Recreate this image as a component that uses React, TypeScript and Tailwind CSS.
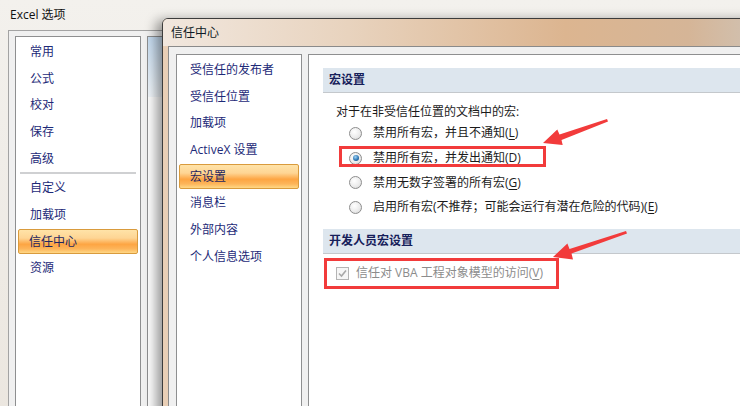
import React from "react";

const font = "font-['Open_Sans','Noto_Sans_CJK_SC',sans-serif]";

const NavItem = ({ label, active, pad }: { label: string; active?: boolean; pad: string }) => (
  <div className="h-[26.7px] flex items-center">
    {active ? (
      <div className="mx-[2px] h-[25px] w-full flex items-center pl-[10px] border border-[#d99b3d] rounded-[2px] bg-[linear-gradient(to_bottom,#ffe3a8_0%,#fed594_35%,#fda543_62%,#fdb55a_82%,#ffd886_100%)] text-[#1d2560]">
        {label}
      </div>
    ) : (
      <div className={`${pad} text-[#1d2a78]`}>{label}</div>
    )}
  </div>
);

const Key = ({ k }: { k: string }) => (
  <>
    (<span className="underline underline-offset-2">{k}</span>)
  </>
);

const Radio = ({ checked }: { checked?: boolean }) => (
  <span className="w-[13px] h-[13px] rounded-full border border-[#8d8d8d] bg-[radial-gradient(circle_at_40%_35%,#ffffff_0%,#ececec_55%,#d2d2d2_100%)] flex items-center justify-center shrink-0">
    {checked && (
      <span className="w-[6px] h-[6px] rounded-full bg-[radial-gradient(circle_at_40%_35%,#9fd3f5_0%,#2f78b5_55%,#143e6a_100%)]" />
    )}
  </span>
);

const SectionHeader = ({ title }: { title: string }) => (
  <div className="h-[25px] flex items-center pl-[6px] bg-[#dde6ee] border-b border-[#c4c8cc] font-bold text-[#16205a]">
    {title}
  </div>
);

const RadioRow = ({ checked, children }: { checked?: boolean; children: React.ReactNode }) => (
  <div className="h-[24.7px] flex items-center gap-[11px]">
    <Radio checked={checked} />
    <span>{children}</span>
  </div>
);

export default function App() {
  const optNav = ["常用", "公式", "校对", "保存", "高级"];
  const optNav2 = ["自定义", "加载项", "信任中心", "资源"];
  const trustNav = ["受信任的发布者", "受信任位置", "加载项", "ActiveX 设置", "宏设置", "消息栏", "外部内容", "个人信息选项"];

  return (
    <div className={`relative w-[740px] h-[406px] overflow-hidden bg-[#ece8e2] text-[12px] leading-[16px] ${font}`}>
      {/* Excel 选项 window */}
      <div className="absolute left-0 top-0 w-[760px] h-[430px] flex flex-col bg-[linear-gradient(to_bottom,#f3f1ed,#ebe6df)]">
        <div className="h-[30px] flex items-center pl-[10px] text-[#111]">Excel 选项</div>
        <div className="flex-1 flex pl-[8px]">
          <div className="flex-1 flex gap-[6px] pl-[6px] pt-[5px] bg-[#f0f0f0] border-l border-t border-[#a3a3a3]">
            <div className="w-[126px] bg-white border border-[#8e8f90] pt-[1.5px]">
              {optNav.map((l) => (
                <NavItem key={l} label={l} pad="pl-[14px]" />
              ))}
              <div className="h-[3px] mx-[4px] border-t-2 border-[#cfd0d2]" />
              {optNav2.map((l) => (
                <NavItem key={l} label={l} active={l === "信任中心"} pad="pl-[14px]" />
              ))}
            </div>
            <div className="flex-1 bg-white border border-[#8e8f90]">
              <div className="h-[60px] bg-[linear-gradient(to_bottom,#c6dcf1,#f3f8fc)]" />
            </div>
          </div>
        </div>
      </div>

      {/* 信任中心 dialog */}
      <div className="absolute left-[162px] top-[18px] w-[620px] h-[420px] flex flex-col border border-[#3c3c3c] rounded-tl-[6px] bg-[linear-gradient(to_right,#e9cfb6,#e6c6a6_40%,#dcc3ab)] shadow-[-6px_2px_12px_rgba(0,0,0,0.4)]">
        <div className="h-[27px] flex items-center pl-[8px] rounded-tl-[5px] bg-[linear-gradient(to_right,#f1e7de,#e8d3be_30%,#dcb590_65%,#d5b597_85%,#cfc6bb)] text-[#0e1a26]">
          信任中心
        </div>
        <div className="flex-1 flex pl-[5px]">
          <div className="flex-1 flex gap-[6px] pl-[7px] pt-[7px] bg-[#f0f0f0] border-l border-t border-[#8a8a8a]">
            <div className="w-[126px] bg-white border border-[#8e8f90] pt-[1.5px]">
              {trustNav.map((l) => (
                <NavItem key={l} label={l} active={l === "宏设置"} pad="pl-[13px]" />
              ))}
            </div>
            <div className="flex-1 bg-white border border-[#8e8f90] pl-[14px] pt-[13px] flex flex-col">
              <SectionHeader title="宏设置" />
              <div className="pl-[13px] flex flex-col text-[#1b1b1b]">
                <div className="h-[18px] mt-[10px] flex items-center">对于在非受信任位置的文档中的宏:</div>
                <div className="pl-[13px] flex flex-col">
                  <RadioRow>
                    禁用所有宏，并且不通知<Key k="L" />
                  </RadioRow>
                  <RadioRow checked>
                    禁用所有宏，并发出通知<Key k="D" />
                  </RadioRow>
                  <RadioRow>
                    禁用无数字签署的所有宏<Key k="G" />
                  </RadioRow>
                  <RadioRow>
                    启用所有宏(不推荐；可能会运行有潜在危险的代码)<Key k="E" />
                  </RadioRow>
                </div>
              </div>
              <div className="mt-[9px]">
                <SectionHeader title="开发人员宏设置" />
              </div>
              <div className="pl-[13px] mt-[7px] h-[25px] flex items-center gap-[7px] text-[#8c8c8c]">
                <span className="w-[13px] h-[13px] border border-[#b4b4b4] bg-[#f6f6f6] flex items-center justify-center shrink-0">
                  <svg width="11" height="11" viewBox="0 0 11 11">
                    <path d="M2 5.5 L4.5 8 L9 2.5" fill="none" stroke="#a8a8a8" strokeWidth="1.6" />
                  </svg>
                </span>
                <span>
                  信任对 VBA 工程对象模型的访问<Key k="V" />
                </span>
              </div>
            </div>
          </div>
        </div>
      </div>

      {/* red annotations */}
      <svg className="absolute inset-0 pointer-events-none" width="740" height="406" viewBox="0 0 740 406">
        <rect x="340.5" y="147.5" width="204" height="18" fill="none" stroke="#f23b3b" strokeWidth="3" />
        <rect x="325.5" y="259.5" width="232" height="28" fill="none" stroke="#f23b3b" strokeWidth="3" />
        <polygon
          points="607,119 608,121.5 561.5,140 562.7,145 543,143 557.3,129.5 559.5,134.5"
          fill="#f23b3b"
        />
        <polygon
          points="626,231 627,233.5 571.5,253.5 573,259.5 553,257 567.4,243.6 569.5,249"
          fill="#f23b3b"
        />
      </svg>
    </div>
  );
}
